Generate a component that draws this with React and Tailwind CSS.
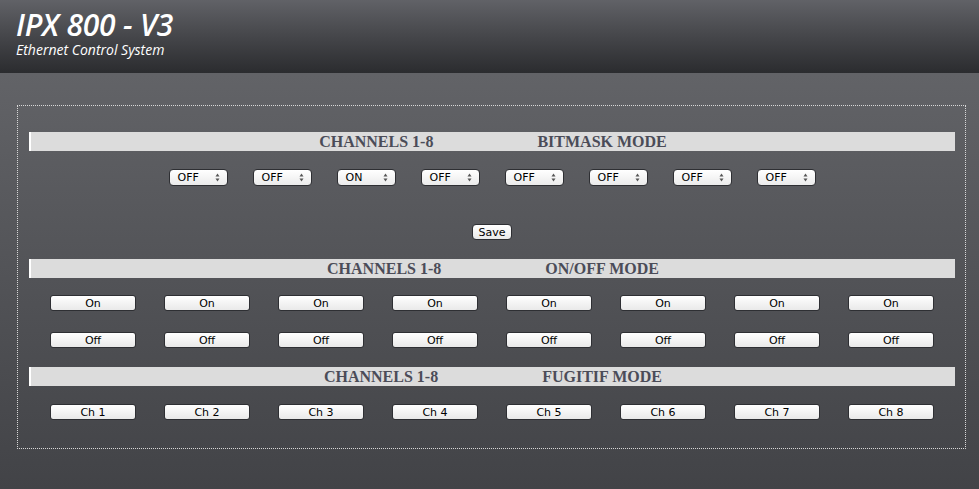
import { useState } from "react";

const CHANNELS = [1, 2, 3, 4, 5, 6, 7, 8];

const SectionBar = ({ mode }) => (
    <div className="h-[19px] bg-[#dcdcdc] border-l-2 border-white flex items-center justify-center gap-[104px] font-['Liberation_Serif',serif] font-bold text-[16px] leading-none text-[#4b4c58]">
        <span>CHANNELS 1-8</span>
        <span>{mode}</span>
    </div>
);

const MacButton = ({ children, className = "", onClick }) => (
    <button
        type="button"
        onClick={onClick}
        className={`h-[16px] rounded-[3px] border border-[#2e2f33] bg-gradient-to-b from-white to-[#e9e9e9] text-[11px] leading-none text-black font-['DejaVu_Sans',sans-serif] ${className}`}
    >
        {children}
    </button>
);

// Small popup-style select, drawn by hand so it looks the same everywhere
const MaskSelect = ({ value, onToggle }) => (
    <button
        type="button"
        onClick={onToggle}
        className="w-[59px] h-[17px] rounded-[4px] border border-[#2e2f33] bg-gradient-to-b from-white to-[#ebebeb] pl-[8px] pr-[7px] flex items-center justify-between text-[11px] leading-none text-black font-['DejaVu_Sans',sans-serif]"
    >
        <span>{value ? "ON" : "OFF"}</span>
        <svg width="5" height="9" viewBox="0 0 5 9">
            <path d="M2.5 0.5 L4.5 3.5 L0.5 3.5 Z" fill="#555" />
            <path d="M0.5 5.5 L4.5 5.5 L2.5 8.5 Z" fill="#555" />
        </svg>
    </button>
);

const App = () => {
    const [mask, setMask] = useState([0, 0, 1, 0, 0, 0, 0, 0]);

    return (
        <div className="min-h-screen bg-gradient-to-b from-[#68696d] to-[#424347]">
            {/* Header */}
            <div className="h-[73px] bg-gradient-to-b from-[#616267] to-[#2b2c2f] pl-[16px] pt-[11px] text-white italic font-['Open_Sans',sans-serif]">
                <h1 className="text-[30px] leading-[28px] font-semibold tracking-[-0.2px]">IPX 800 - V3</h1>
                <p className="mt-[3px] text-[14px] leading-[16px]">Ethernet Control System</p>
            </div>

            {/* Panel */}
            <div className="ml-[17px] mr-[13px] mt-[32px] border border-dotted border-[#d8d8d8] pl-[11px] pr-[10px] pt-[26px] pb-[28px]">
                <SectionBar mode="BITMASK MODE" />

                <div className="mt-[18px] flex justify-center gap-[25px]">
                    {mask.map((v, i) => (
                        <MaskSelect
                            key={i}
                            value={v}
                            onToggle={() => {
                                const next = [...mask];
                                next[i] = next[i] ? 0 : 1;
                                setMask(next);
                            }}
                        />
                    ))}
                </div>

                <div className="mt-[38px] flex justify-center">
                    <MacButton className="w-[40px] rounded-[4px]">Save</MacButton>
                </div>

                <div className="mt-[19px]">
                    <SectionBar mode="ON/OFF MODE" />
                </div>

                <div className="mt-[17px] flex justify-center gap-[28px]">
                    {CHANNELS.map((c) => (
                        <MacButton key={c} className="w-[86px]">On</MacButton>
                    ))}
                </div>
                <div className="mt-[21px] flex justify-center gap-[28px]">
                    {CHANNELS.map((c) => (
                        <MacButton key={c} className="w-[86px]">Off</MacButton>
                    ))}
                </div>

                <div className="mt-[19px]">
                    <SectionBar mode="FUGITIF MODE" />
                </div>

                <div className="mt-[18px] flex justify-center gap-[28px]">
                    {CHANNELS.map((c) => (
                        <MacButton key={c} className="w-[86px]">Ch {c}</MacButton>
                    ))}
                </div>
            </div>
        </div>
    );
};

export default App;
